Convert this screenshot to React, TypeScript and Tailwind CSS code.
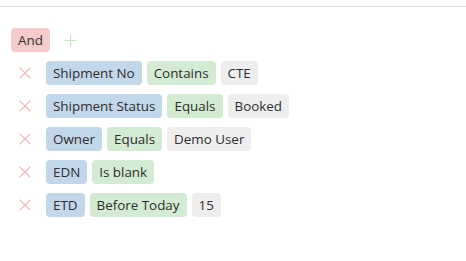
import { X, Plus } from 'lucide-react';

type Filter = { field: string; op: string; value?: string };

const filters: Filter[] = [
  { field: 'Shipment No', op: 'Contains', value: 'CTE' },
  { field: 'Shipment Status', op: 'Equals', value: 'Booked' },
  { field: 'Owner', op: 'Equals', value: 'Demo User' },
  { field: 'EDN', op: 'Is blank' },
  { field: 'ETD', op: 'Before Today', value: '15' },
];

function Pill({ children, className }: { children: React.ReactNode; className: string }) {
  return (
    <span className={`flex h-6 items-center rounded-[4px] px-[7px] ${className}`}>{children}</span>
  );
}

export default function App() {
  return (
    <div
      className="h-[261px] w-[466px] bg-white text-[13.4px] text-[#2e2e2e]"
      style={{ fontFamily: '"Open Sans", "Noto Sans", sans-serif' }}
    >
      <div className="h-[7px] border-b border-[#dedede]" />
      <div className="flex items-center gap-[11px] pl-[11px] pt-[21px]">
        <Pill className="bg-[#f5cacb]">And</Pill>
        <Plus size={19} strokeWidth={1.5} className="text-[#c6e6c6]" />
      </div>
      <div className="mt-[9px] flex flex-col gap-[9px] pl-[15px]">
        {filters.map((f) => (
          <div key={f.field} className="flex items-center">
            <X size={20} strokeWidth={1.4} className="mr-[11px] text-[#f1b9b9]" />
            <div className="flex gap-[5px]">
              <Pill className="bg-[#c3d7ea]">{f.field}</Pill>
              <Pill className="bg-[#d2ebd2]">{f.op}</Pill>
              {f.value && <Pill className="bg-[#eeeeee]">{f.value}</Pill>}
            </div>
          </div>
        ))}
      </div>
    </div>
  );
}
